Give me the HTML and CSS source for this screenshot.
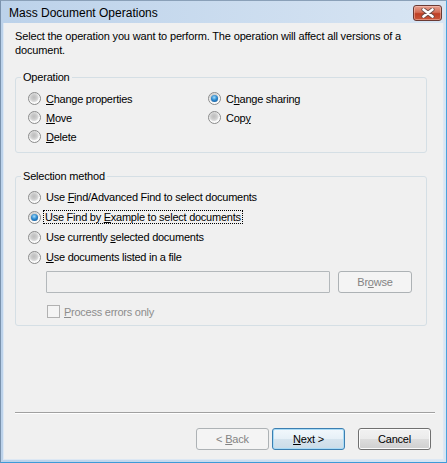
FILE: index.html
```html
<!DOCTYPE html>
<html lang="en">
<head>
  <meta charset="UTF-8">
  <title>Mass Document Operations</title>
  <link rel="stylesheet" href="styles.css">
</head>
<body>

  <div class="window">
    <div class="titlebar">
      <span class="title">Mass Document Operations</span>
      <div class="close">
        <svg width="14" height="10" viewBox="0 0 14 10">
          <path d="M2.5 1.5 L11.5 8.5 M11.5 1.5 L2.5 8.5" stroke="#6b4a44" stroke-width="4.2" stroke-linecap="round"/>
          <path d="M2.5 1.5 L11.5 8.5 M11.5 1.5 L2.5 8.5" stroke="#fff" stroke-width="2.6" stroke-linecap="round"/>
        </svg>
      </div>
    </div>

    <div class="client">
      <p class="intro">Select the operation you want to perform. The operation will affect all versions of a document.</p>

      <fieldset class="group group-op">
        <legend>Operation</legend>
        <div class="op-grid">
          <div class="opt"><span class="radio"></span><span><u>C</u>hange properties</span></div>
          <div class="opt"><span class="radio on"></span><span>C<u>h</u>ange sharing</span></div>
          <div class="opt"><span class="radio"></span><span><u>M</u>ove</span></div>
          <div class="opt"><span class="radio"></span><span>Cop<u>y</u></span></div>
          <div class="opt"><span class="radio"></span><span><u>D</u>elete</span></div>
        </div>
      </fieldset>

      <fieldset class="group group-sel">
        <legend>Selection method</legend>
        <div class="sel-list">
          <div class="opt"><span class="radio"></span><span>Use <u>F</u>ind/Advanced Find to select documents</span></div>
          <div class="opt"><span class="radio on"></span><span class="focus">Use Find by <u>E</u>xample to select documents</span></div>
          <div class="opt"><span class="radio"></span><span>Use currently <u>s</u>elected documents</span></div>
          <div class="opt"><span class="radio"></span><span><u>U</u>se documents listed in a file</span></div>
        </div>
        <div class="file-row">
          <div class="textbox"></div>
          <div class="btn disabled browse"><span>Br<u>o</u>wse</span></div>
        </div>
        <div class="check-row">
          <span class="checkbox"></span><span class="dim"><u>P</u>rocess errors only</span>
        </div>
      </fieldset>

      <div class="separator"></div>

      <div class="buttons">
        <div class="btn disabled"><span>&lt; <u>B</u>ack</span></div>
        <div class="btn default"><span><u>N</u>ext &gt;</span></div>
        <div class="btn cancel"><span>Cancel</span></div>
      </div>
    </div>
  </div>

</body>
</html>
```

FILE: styles.css
```css
* {
  box-sizing: border-box;
}

body {
  margin: 0;
  font-family: "Liberation Sans", Arial, sans-serif;
  font-size: 11px;
  color: #000;
  background: #fff;
}

.window {
  width: 447px;
  height: 463px;
  display: flex;
  flex-direction: column;
  background: linear-gradient(to right, #bcd2ea, #d8e5f3);
  border: 1px solid #7a92ad;
  border-top-color: #8aa0b8;
  border-bottom-color: #3d9ad8;
  border-right-color: #4aa3dc;
  padding: 0 2px 2px;
}

.titlebar {
  height: 22px;
  flex-shrink: 0;
  display: flex;
  align-items: center;
  justify-content: space-between;
  padding: 0 2px 0 6px;
}

.title {
  font-size: 12px;
  color: #000;
  padding-top: 2px;
}

.close {
  width: 29px;
  height: 16px;
  margin-top: 2px;
  border: 1px solid #6a3a34;
  border-radius: 3px;
  background: linear-gradient(#e6a08f 0%, #d46e56 45%, #bf3f25 55%, #c9573a 100%);
  box-shadow: inset 0 0 0 1px rgba(255, 210, 200, 0.45);
  display: flex;
  align-items: center;
  justify-content: center;
}

.client {
  flex: 1;
  display: flex;
  flex-direction: column;
  background: #f0f0f0;
  border: 1px solid #dde8f4;
  border-top: none;
  padding: 0 17px 9px 11px;
}

.intro {
  margin: 6px 0 0;
  line-height: 14px;
  letter-spacing: -0.16px;
}

.group {
  margin: 14px 0 0;
  padding: 0 0 0 12px;
  border: 1px solid #d5dfe5;
  border-radius: 3px;
  width: 412px;
  min-width: 0;
}

.group legend {
  margin-left: -7px;
  padding: 0 2px;
  line-height: 13px;
  letter-spacing: -0.2px;
}

.op-grid {
  display: grid;
  grid-template-columns: 180px 1fr;
  padding: 5px 0 6px;
}

.opt {
  height: 19px;
  display: flex;
  align-items: center;
  gap: 5px;
  letter-spacing: -0.25px;
  white-space: nowrap;
}

.group-sel {
  margin-top: 17px;
}

.sel-list {
  padding-top: 4px;
}

.sel-list .opt {
  height: 20px;
}

.focus {
  outline: 1px dotted #000;
  outline-offset: 0;
  line-height: 12px;
  padding: 0 1px;
  margin-left: -2px;
}

.radio {
  width: 13px;
  height: 13px;
  flex-shrink: 0;
  border-radius: 50%;
  border: 1px solid #8a8b8b;
  background: radial-gradient(circle at 45% 40%, #bdbdbd 0, #cacaca 2.5px, #dcdcdc 4.2px, #f6f6f6 5px, #fdfdfd 6px);
  display: flex;
  align-items: center;
  justify-content: center;
}

.radio.on::after {
  content: "";
  width: 7px;
  height: 7px;
  border-radius: 50%;
  background: radial-gradient(circle at 45% 35%, #a5dcf8 0, #2d8ad0 45%, #0d4d8d 100%);
}

.file-row {
  display: flex;
  gap: 8px;
  margin: 4px 0 0 18px;
}

.textbox {
  width: 284px;
  height: 22px;
  border: 1px solid #b3b8bb;
  border-radius: 1px;
  background: #f0f0f0;
}

.btn {
  width: 73px;
  height: 22px;
  display: flex;
  align-items: center;
  justify-content: center;
  border: 1px solid #707070;
  border-radius: 3px;
  background: linear-gradient(#f2f2f2 0%, #ebebeb 50%, #dddddd 51%, #cfcfcf 100%);
  box-shadow: inset 0 0 0 1px #fcfcfc;
  letter-spacing: -0.2px;
  white-space: pre;
}

.btn.disabled {
  border-color: #adb2b5;
  background: #f4f4f4;
  box-shadow: none;
  color: #838383;
}

.btn.default {
  border-color: #3c7fb1;
  box-shadow: inset 0 0 0 1px #a9dbf6;
  background: linear-gradient(#f2f8fc 0%, #e6f0f7 50%, #d6e4ee 51%, #cbdce8 100%);
}

.browse {
  width: 74px;
}

.check-row {
  display: flex;
  align-items: center;
  gap: 4px;
  height: 19px;
  margin: 9px 0 4px 19px;
  letter-spacing: -0.25px;
}

.checkbox {
  width: 13px;
  height: 13px;
  border: 1px solid #b1b1b1;
  background: #f4f4f4;
}

.dim {
  color: #8d8d8d;
}

.separator {
  margin: auto 0 0 0;
  width: 420px;
  border-top: 1px solid #a0a0a0;
  border-bottom: 1px solid #fff;
}

.buttons {
  display: flex;
  justify-content: flex-end;
  gap: 3px;
  margin: 14px -5px 0 0;
}

.btn.cancel {
  margin-left: 10px;
}
```
